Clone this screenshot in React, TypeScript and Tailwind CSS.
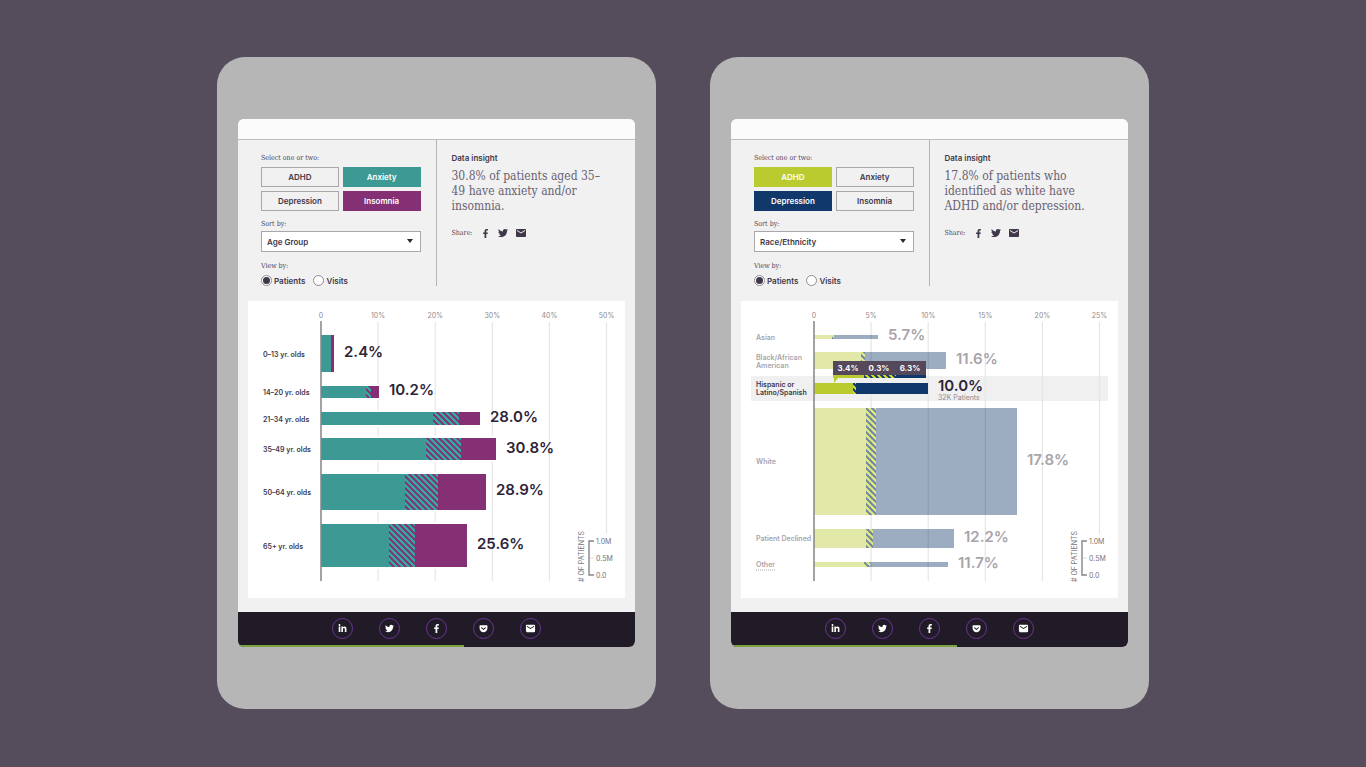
import { useId, useState } from "react";
import { FaFacebookF, FaGetPocket, FaLinkedinIn, FaTwitter } from "react-icons/fa";
import { MdEmail } from "react-icons/md";

type Bar = {
  label: string[];
  labelY: number;
  top: number;
  height: number;
  hatchStart: number;
  hatchEnd: number;
  end: number;
  value: string;
  valueY: number;
  note?: string;
  state?: "normal" | "faded" | "active";
  dotted?: boolean;
};

type Palette = { first: string; second: string; hatchA: string; hatchB: string };

type Condition = { name: string; on?: string };

type PanelProps = {
  conditions: Condition[];
  sort: string;
  insight: string;
  ticks: string[];
  bars: Bar[];
  palette: Palette;
  tooltip?: string[];
};

const SORTS = ["Age Group", "Race/Ethnicity"];
const AXIS = 73;
const STEP = 57.1;

const ageBars: Bar[] = [
  { label: ["0–13 yr. olds"], labelY: 56, top: 34, height: 37, hatchStart: 83, hatchEnd: 83, end: 86, value: "2.4%", valueY: 56 },
  { label: ["14–20 yr. olds"], labelY: 94, top: 85, height: 12, hatchStart: 118, hatchEnd: 123, end: 131, value: "10.2%", valueY: 94 },
  { label: ["21–34 yr. olds"], labelY: 121, top: 111, height: 13, hatchStart: 185, hatchEnd: 211, end: 232, value: "28.0%", valueY: 121 },
  { label: ["35–49 yr. olds"], labelY: 151, top: 137, height: 22, hatchStart: 178, hatchEnd: 213, end: 248, value: "30.8%", valueY: 152 },
  { label: ["50–64 yr. olds"], labelY: 194, top: 173, height: 36, hatchStart: 157, hatchEnd: 190, end: 238, value: "28.9%", valueY: 194 },
  { label: ["65+ yr. olds"], labelY: 248, top: 223, height: 43, hatchStart: 141, hatchEnd: 167, end: 219, value: "25.6%", valueY: 248 },
];

const ethnicityBars: Bar[] = [
  { label: ["Asian"], labelY: 39, top: 34, height: 4, hatchStart: 91, hatchEnd: 93, end: 137, value: "5.7%", valueY: 39, state: "faded" },
  { label: ["Black/African", "American"], labelY: 59, top: 51, height: 17, hatchStart: 120, hatchEnd: 124, end: 205, value: "11.6%", valueY: 63, state: "faded" },
  { label: ["Hispanic or", "Latino/Spanish"], labelY: 86, top: 82, height: 11, hatchStart: 112, hatchEnd: 115, end: 187, value: "10.0%", valueY: 90, note: "32K Patients", state: "active" },
  { label: ["White"], labelY: 163, top: 107, height: 107, hatchStart: 125, hatchEnd: 135, end: 276, value: "17.8%", valueY: 164, state: "faded" },
  { label: ["Patient Declined"], labelY: 240, top: 228, height: 19, hatchStart: 125, hatchEnd: 132, end: 213, value: "12.2%", valueY: 241, state: "faded" },
  { label: ["Other"], labelY: 266, top: 261, height: 5, hatchStart: 123, hatchEnd: 129, end: 207, value: "11.7%", valueY: 267, state: "faded", dotted: true },
];

function Chart({ ticks, bars, palette, tooltip }: Pick<PanelProps, "ticks" | "bars" | "palette" | "tooltip">) {
  const hatch = "hatch" + useId().replace(/[^a-zA-Z0-9]/g, "");
  return (
    <svg viewBox="0 0 377 297" className="block w-full bg-white font-['Inter',sans-serif]" role="img" aria-label="Share of patients by group">
      <defs>
        <pattern id={hatch} width="6" height="6" patternUnits="userSpaceOnUse">
          <rect width="6" height="6" fill={palette.hatchA} />
          <path d="M-1-1 7 7M-1 5 1 7M5-1 7 1" stroke={palette.hatchB} strokeWidth="2" />
        </pattern>
      </defs>

      {bars.some((b) => b.state === "active") && <rect x="10" y="75" width="357" height="25" fill="#f0f0f0" />}

      {ticks.map((t, i) => (
        <g key={t}>
          {i > 0 && <path d={`M${AXIS + STEP * i} 21V${i === 5 ? 233 : 280}`} stroke="#e6e6e6" strokeWidth="1.2" />}
          <text x={AXIS + STEP * i} y="17" textAnchor="middle" fontSize="7" fill="#8d8a90">
            {t}
          </text>
        </g>
      ))}

      {bars.map((b) => {
        const faded = b.state === "faded";
        const ink = faded ? "#a8a4ab" : "#40374a";
        return (
          <g key={b.value}>
            {!faded && !b.note && <rect x={AXIS} y={b.top - 2} width={b.end - AXIS} height={b.height + 4} fill="#fff" />}
            <g opacity={faded ? 0.41 : 1}>
              <rect x={AXIS} y={b.top} width={b.hatchStart - AXIS} height={b.height} fill={palette.first} />
              <rect x={b.hatchEnd} y={b.top} width={b.end - b.hatchEnd} height={b.height} fill={palette.second} />
            </g>
            <rect x={b.hatchStart} y={b.top} width={b.hatchEnd - b.hatchStart} height={b.height} fill={`url(#${hatch})`} opacity={faded ? 0.6 : 1} />
            <text fontSize="7" fontWeight="600" fill={ink}>
              {b.label.map((line, i) => (
                <tspan key={line} x="15" y={b.labelY + i * 8}>
                  {line}
                </tspan>
              ))}
            </text>
            {b.dotted && <path d="M15 269H35" stroke="#a8a4ab" strokeDasharray="1 1" />}
            <text x={b.end + 10} y={b.valueY} fontSize="15" fontWeight="600" fill={faded ? "#a8a4ab" : "#2d2438"}>
              {b.value}
            </text>
            {b.note && (
              <text x={b.end + 10} y={b.valueY + 9} fontSize="7" fill="#8d8a90">
                {b.note}
              </text>
            )}
          </g>
        );
      })}

      <path d={`M${AXIS} 20V280`} stroke="#858585" strokeWidth="1.5" />

      {tooltip && (
        <g>
          <rect x="92" y="60" width="93" height="14" fill="#54485a" />
          <path d="M92 74H123V77H97L93 82V77H92Z" fill={palette.first} />
          <rect x="123" y="74" width="32" height="3" fill={`url(#${hatch})`} />
          <rect x="155" y="74" width="30" height="3" fill={palette.second} />
          {tooltip.map((t, i) => (
            <text key={t} x={107 + i * 31} y="70" textAnchor="middle" fontSize="8" fontWeight="700" fill="#fff">
              {t}
            </text>
          ))}
        </g>
      )}

      <g fontSize="7" fill="#77737a">
        <text transform="translate(336 281) rotate(-90)">
          # OF PATIENTS
        </text>
        <path d="M346 240H341V274H346" fill="none" stroke="#858585" strokeWidth="1.4" />
        <path d="M342 257H346" stroke="#dddddd" />
        <text x="348" y="243">1.0M</text>
        <text x="348" y="260">0.5M</text>
        <text x="348" y="277">0.0</text>
      </g>
    </svg>
  );
}

const legend = "font-['DejaVu_Serif_Condensed','DejaVu_Serif',serif] text-[7px] leading-[10px] text-[#51475a]";

function Panel({ conditions, sort, insight, ticks, bars, palette, tooltip }: PanelProps) {
  const id = useId();
  const [order, setOrder] = useState(sort);
  const [view, setView] = useState("Patients");
  return (
    <section className="min-w-0 max-w-[439px] flex-1 rounded-[28px] bg-[#b6b6b6] px-[21px] py-[62px] font-['Inter',sans-serif] text-[#40374a]">
      <div className="overflow-hidden rounded-md bg-[#f1f1f1]">
        <div className="h-[21px] border-b border-[#bdbdbd] bg-[#fbfbfb]" />
        <div className="grid h-[161px] grid-cols-2 pb-4">
          <div className="border-r border-[#b5b3b6] pl-[23px] pr-[15px] pt-[13px]">
            <p className={legend}>Select one or two:</p>
            <div className="mt-1 grid grid-cols-2 gap-1">
              {conditions.map((c) => (
                <button
                  key={c.name}
                  aria-pressed={!!c.on}
                  className={`h-5 text-[8px] font-semibold leading-[10px] ${c.on ? `${c.on} text-white` : "border border-[#a9a7ab]"}`}
                >
                  {c.name}
                </button>
              ))}
            </div>
            <label htmlFor={`${id}sort`} className={`${legend} mt-2 block`}>
              Sort by:
            </label>
            <div className="relative mt-[2px]">
              <select
                id={`${id}sort`}
                value={order}
                onChange={(e) => setOrder(e.target.value)}
                className="block h-[21px] w-full appearance-none border border-[#a9a7ab] bg-white px-[5px] text-[8px] font-semibold leading-[10px]"
              >
                {SORTS.map((s) => (
                  <option key={s}>{s}</option>
                ))}
              </select>
              <svg viewBox="0 0 6 4" className="pointer-events-none absolute right-2 top-2 h-1 w-[6px] fill-[#2d2438]">
                <path d="M0 0H6L3 4Z" />
              </svg>
            </div>
            <fieldset className="mt-[9px]">
              <legend className={legend}>View by:</legend>
              <div className="mt-1 flex gap-2">
                {["Patients", "Visits"].map((v) => (
                  <label key={v} className="flex items-center gap-[2px] text-[8px] font-semibold leading-[10px]">
                    <input
                      type="radio"
                      name={`${id}view`}
                      checked={view === v}
                      onChange={() => setView(v)}
                      className="grid size-[11px] appearance-none place-items-center rounded-full border border-[#8f8c92] bg-white before:size-[7px] before:rounded-full checked:before:bg-[#40374a]"
                    />
                    {v}
                  </label>
                ))}
              </div>
            </fieldset>
          </div>
          <div className="pl-[15px] pr-[28px] pt-[13px]">
            <h2 className="text-[8px] font-semibold leading-[10px]">Data insight</h2>
            <p className="mt-[6px] font-['DejaVu_Serif_Condensed','DejaVu_Serif',serif] text-[12px] leading-[15px] text-[#6a6271]">{insight}</p>
            <div className="mt-[13px] flex items-center">
              <span className={legend}>Share:</span>
              <a href="#facebook" aria-label="Facebook" className="ml-[9px]">
                <FaFacebookF className="size-[9px]" />
              </a>
              <a href="#twitter" aria-label="Twitter" className="ml-2">
                <FaTwitter className="size-[10px]" />
              </a>
              <a href="#email" aria-label="Email" className="ml-[7px]">
                <MdEmail className="size-3" />
              </a>
            </div>
          </div>
        </div>
        <div className="px-[10px] pb-[14px]">
          <Chart ticks={ticks} bars={bars} palette={palette} tooltip={tooltip} />
        </div>
        <footer className="bg-[#211b27]">
          <nav className="flex h-[33px] items-center justify-center gap-[26px] text-white">
            {[
              { name: "LinkedIn", Icon: FaLinkedinIn },
              { name: "Twitter", Icon: FaTwitter },
              { name: "Facebook", Icon: FaFacebookF },
              { name: "Pocket", Icon: FaGetPocket },
              { name: "Email", Icon: MdEmail },
            ].map(({ name, Icon }) => (
              <a key={name} href="#share" aria-label={name} className="grid size-[21px] place-items-center rounded-full border border-[#6b3596]">
                <Icon className={name === "Email" ? "size-[11px]" : "size-[9px]"} />
              </a>
            ))}
          </nav>
          <div className="h-[2px] w-[57%] bg-[#7ba23f]" />
        </footer>
      </div>
    </section>
  );
}

export default function App() {
  return (
    <main className="flex min-h-screen items-center justify-center gap-[54px] bg-[#554c5c] px-4 pb-px">
      <Panel
        conditions={[{ name: "ADHD" }, { name: "Anxiety", on: "bg-[#3d9994]" }, { name: "Depression" }, { name: "Insomnia", on: "bg-[#852f74]" }]}
        sort="Age Group"
        insight="30.8% of patients aged 35–49 have anxiety and/or insomnia."
        ticks={["0", "10%", "20%", "30%", "40%", "50%"]}
        bars={ageBars}
        palette={{ first: "#3d9994", second: "#852f74", hatchA: "#2fb0a4", hatchB: "#852f74" }}
      />
      <Panel
        conditions={[{ name: "ADHD", on: "bg-[#b9cb2f]" }, { name: "Anxiety" }, { name: "Depression", on: "bg-[#10386a]" }, { name: "Insomnia" }]}
        sort="Race/Ethnicity"
        insight="17.8% of patients who identified as white have ADHD and/or depression."
        ticks={["0", "5%", "10%", "15%", "20%", "25%"]}
        bars={ethnicityBars}
        palette={{ first: "#b9cb2f", second: "#10386a", hatchA: "#d5e02a", hatchB: "#10386a" }}
        tooltip={["3.4%", "0.3%", "6.3%"]}
      />
    </main>
  );
}
